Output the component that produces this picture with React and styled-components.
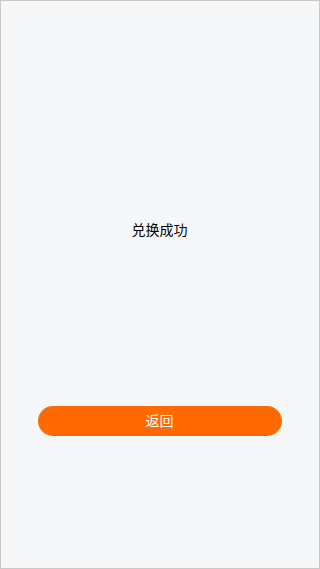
import React from "react";
import styled, { createGlobalStyle } from "styled-components";

const Global = createGlobalStyle`
  html, body { margin: 0; padding: 0; }
  body { font-family: "Noto Sans CJK SC", "Noto Sans", sans-serif; }
  * { box-sizing: border-box; }
`;

const Page = styled.div`
  width: 320px;
  height: 569px;
  background: #f6f7f9;
  border: 1px solid #c9c9c9;
  display: flex;
  flex-direction: column;
  align-items: center;
  padding: 218px 38px 0 37px;
`;

const Message = styled.div`
  font-size: 14px;
  line-height: 20px;
  color: #000;
  font-weight: 400;
`;

const BackButton = styled.button`
  margin-top: 167px;
  width: 244px;
  height: 30px;
  border: none;
  border-radius: 15px;
  background: #ff6a00;
  color: #fff;
  font-family: inherit;
  font-size: 14px;
  line-height: 28px;
  padding: 0 0 2px;
`;

export default function App() {
  return (
    <>
      <Global />
      <Page>
        <Message>兑换成功</Message>
        <BackButton>返回</BackButton>
      </Page>
    </>
  );
}
